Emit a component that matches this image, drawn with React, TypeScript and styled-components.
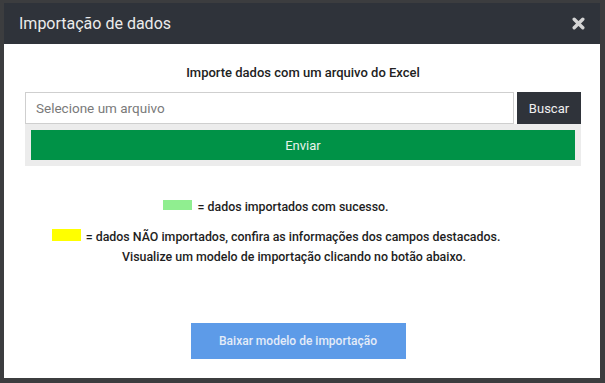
import React from "react";
import styled, { createGlobalStyle } from "styled-components";

const GlobalStyle = createGlobalStyle`
    html, body {
        margin: 0;
        padding: 0;
        background-color: #3c3d3f;
        font-family: Roboto, "Liberation Sans", Arial, sans-serif;
    }
    * { box-sizing: border-box; }
`;

const SOverlay = styled.div`
    width: 605px;
    height: 383px;
    padding: 3px 5px 5px 4px;
`;

const SModal = styled.div`
    display: flex;
    flex-direction: column;
    width: 596px;
    height: 375px;
    background-color: #ffffff;
`;

const SHeader = styled.div`
    display: flex;
    align-items: center;
    justify-content: space-between;
    height: 41px;
    padding: 0 15px 0 15px;
    background-color: #2f333a;
`;

const STitle = styled.h1`
    margin: 0;
    font-size: 16px;
    font-weight: 400;
    color: #ececec;
`;

const SClose = styled.button`
    display: flex;
    padding: 0;
    border: none;
    background: transparent;
    cursor: pointer;
`;

const SBody = styled.div`
    display: flex;
    flex-direction: column;
    padding: 21px 19px 0 21px;
`;

const SLead = styled.p`
    margin: 0 0 11px;
    font-size: 13px;
    line-height: 16px;
    font-weight: 500;
    color: #222;
    text-align: center;
`;

const SInputRow = styled.div`
    display: flex;
    gap: 3px;
    height: 32px;
`;

const SInput = styled.input`
    flex: 1;
    height: 32px;
    padding: 0 10px;
    border: 1px solid #cfcfcf;
    outline: none;
    font-family: inherit;
    font-size: 13.5px;
    color: #333;

    &::placeholder {
        color: #7a7a7a;
    }
`;

const SSearch = styled.button`
    width: 64px;
    height: 32px;
    border: none;
    background-color: #2f333a;
    color: #f0f0f0;
    font-family: inherit;
    font-size: 13px;
    cursor: pointer;
`;

const SPanel = styled.div`
    padding: 6px;
    background-color: #ececec;
`;

const SSend = styled.button`
    width: 100%;
    height: 30px;
    border: none;
    background-color: #009247;
    color: #e9f3ec;
    font-family: inherit;
    font-size: 13px;
    cursor: pointer;
`;

const SLegend = styled.div`
    display: flex;
    flex-direction: column;
    align-items: center;
    gap: 10px;
    margin-top: 31px;
`;

const SLegendBlock = styled.div`
    display: flex;
    flex-direction: column;
    font-size: 12.4px;
    line-height: 20px;
    font-weight: 500;
    color: #1e1e1e;
`;

const SRow = styled.p<{shift: number}>`
    display: flex;
    align-items: center;
    justify-content: center;
    gap: 5px;
    margin: 0;
    padding-right: ${({shift}) => shift}px;
`;

const SSwatch = styled.span<{color: string; tall?: boolean}>`
    display: inline-block;
    width: 29px;
    height: ${({tall}) => tall ? "12px" : "10px"};
    margin-top: -4px;
    background-color: ${({color}) => color};
`;

const SFooter = styled.div`
    display: flex;
    justify-content: center;
    padding-right: 10px;
    margin-top: 56px;
`;

const SDownload = styled.button`
    width: 215px;
    height: 36px;
    border: none;
    background-color: #5d9be8;
    color: #e4ecf8;
    font-family: inherit;
    font-size: 12px;
    font-weight: 500;
    cursor: pointer;
`;

function CloseIcon(){
    return (
        <svg width="13" height="13" viewBox="0 0 13 13">
            <path d="M2.2 2.2 L10.8 10.8 M10.8 2.2 L2.2 10.8" stroke="#d4d4d4" strokeWidth="3.4" strokeLinecap="round" />
        </svg>
    )
}

export default function App(){
    return (
        <>
            <GlobalStyle />
            <SOverlay>
                <SModal>
                    <SHeader>
                        <STitle>Importação de dados</STitle>
                        <SClose type="button"><CloseIcon /></SClose>
                    </SHeader>
                    <SBody>
                        <SLead>Importe dados com um arquivo do Excel</SLead>
                        <SInputRow>
                            <SInput placeholder="Selecione um arquivo" readOnly />
                            <SSearch type="button">Buscar</SSearch>
                        </SInputRow>
                        <SPanel>
                            <SSend type="button">Enviar</SSend>
                        </SPanel>
                        <SLegend>
                            <SLegendBlock>
                                <SRow shift={54}><SSwatch color="#90ee90" /> = dados importados com sucesso.</SRow>
                            </SLegendBlock>
                            <SLegendBlock>
                                <SRow shift={54}><SSwatch color="#ffff00" tall /> = dados NÃO importados, confira as informações dos campos destacados.</SRow>
                                <SRow shift={18}>Visualize um modelo de importação clicando no botão abaixo.</SRow>
                            </SLegendBlock>
                        </SLegend>
                        <SFooter>
                            <SDownload type="button">Baixar modelo de importação</SDownload>
                        </SFooter>
                    </SBody>
                </SModal>
            </SOverlay>
        </>
    )
}
